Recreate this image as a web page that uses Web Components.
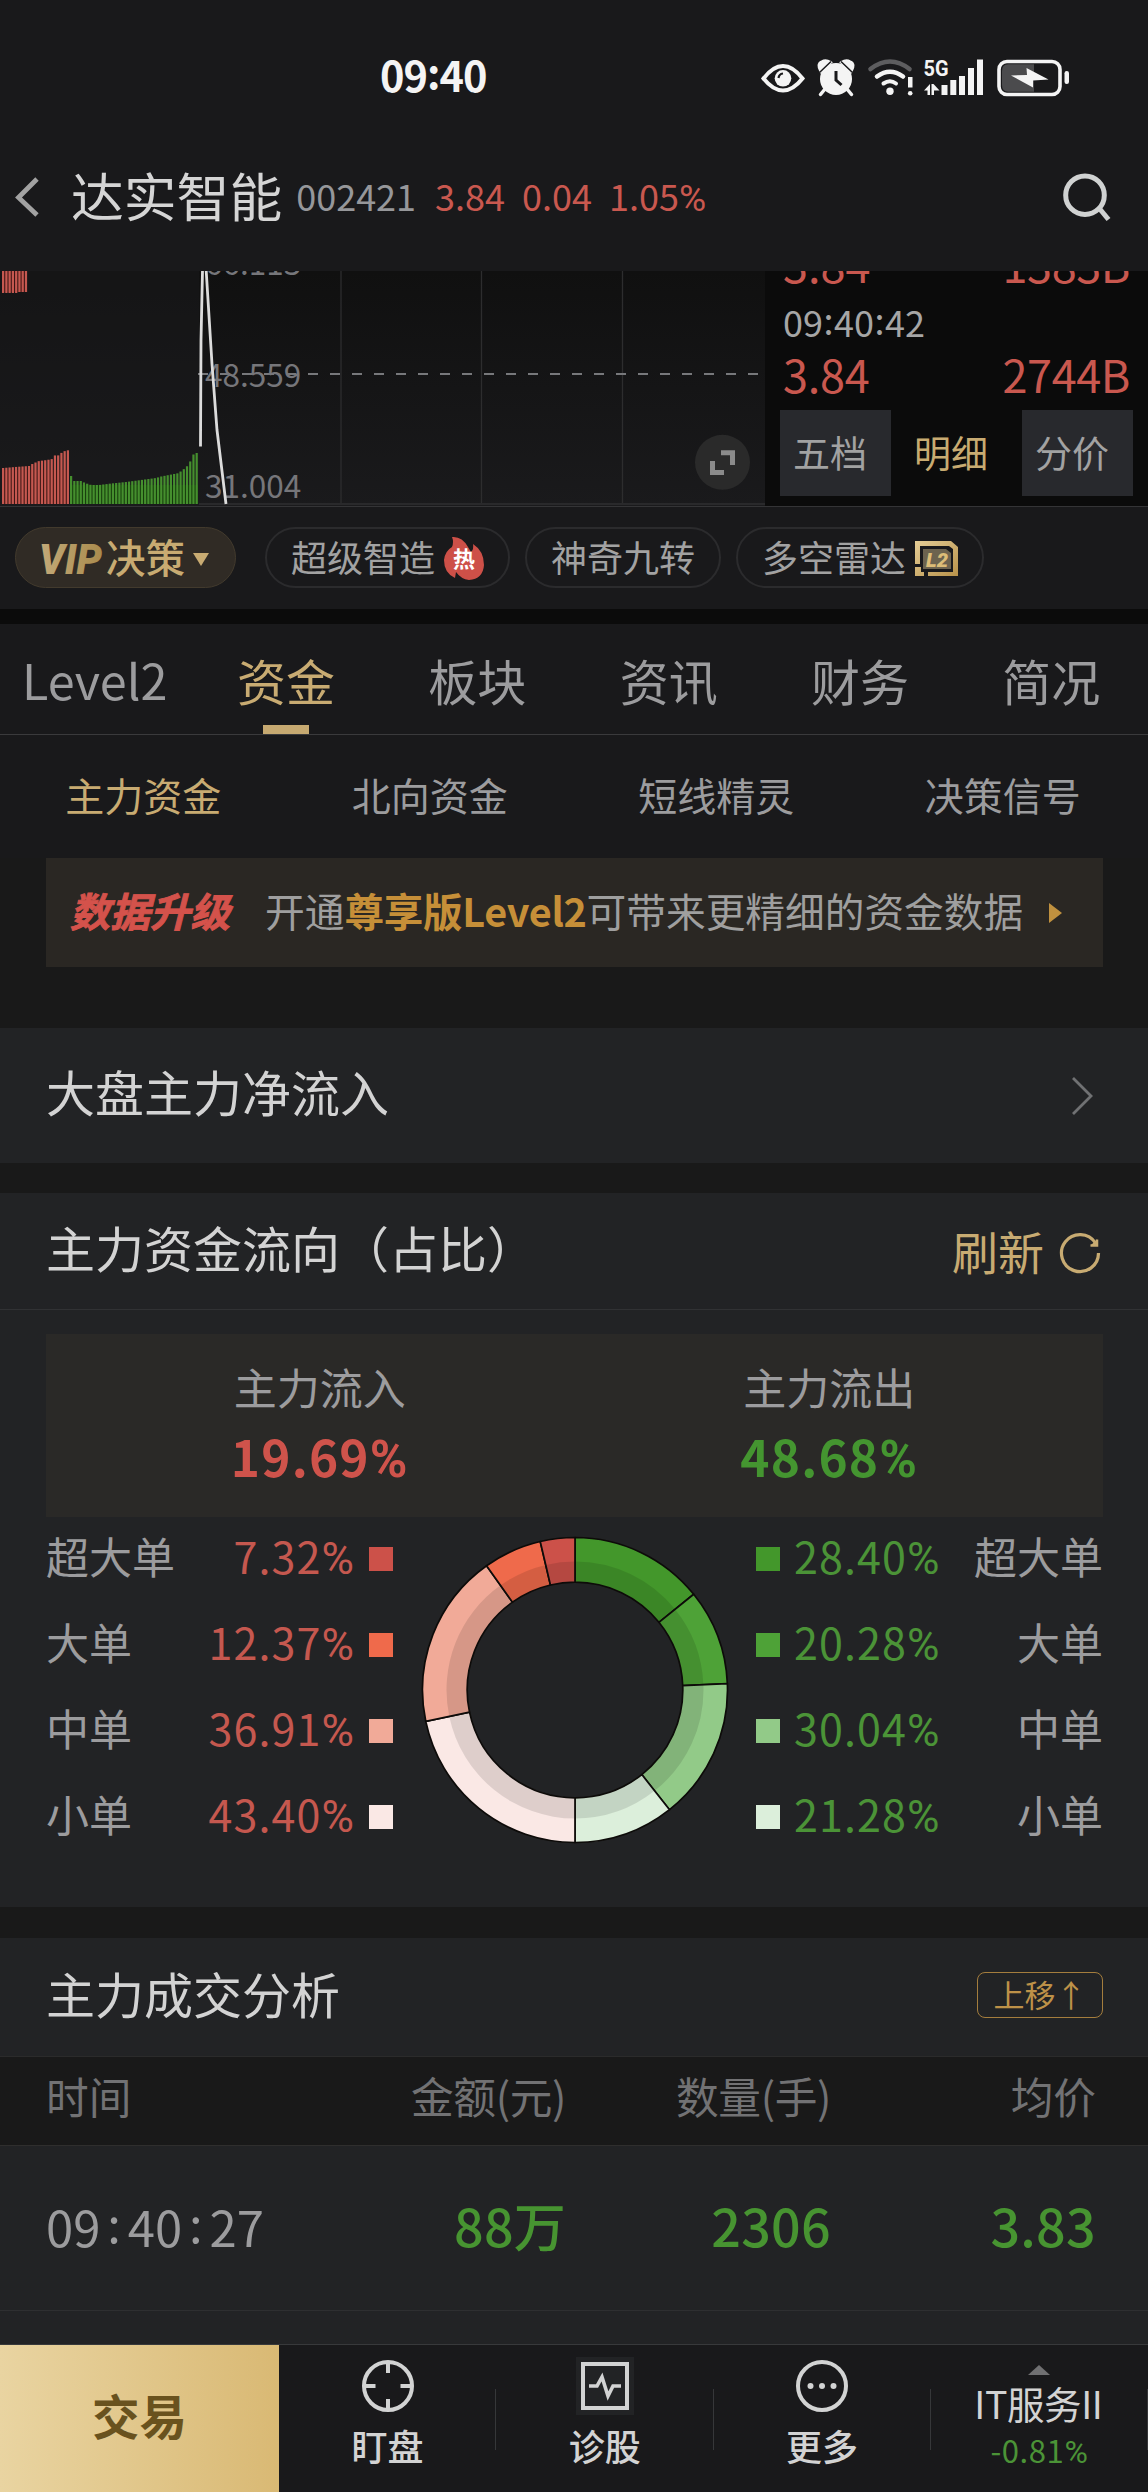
<!DOCTYPE html>
<html lang="zh-CN">
<head>
<meta charset="utf-8">
<title>达实智能 002421</title>
<style>
html,body{margin:0;padding:0;background:#19191a}
body{width:1148px;height:2492px;overflow:hidden;font-family:"Noto Sans CJK SC",sans-serif;color:#d4d4d4}
</style>
</head>
<body>
<stock-page></stock-page>
<script>
function define(tag, css, html, after) {
  const tpl = document.createElement('template');
  tpl.innerHTML = '<style>:host{display:block;box-sizing:border-box}*{box-sizing:border-box}svg{display:block;flex:none;overflow:visible}' + css + '</style>' + html;
  customElements.define(tag, class extends HTMLElement {
    connectedCallback() {
      if (this.shadowRoot) return;
      this.attachShadow({ mode: 'open' }).appendChild(tpl.content.cloneNode(true));
      if (after) after.call(this, this.shadowRoot);
    }
  });
}

/* Single-line label. s: size, c: colour, w: weight, ls: letter spacing, colon: padding beside ":" */
define('ui-text',
  ':host{display:block;flex:none;white-space:pre;line-height:1;padding-bottom:.115em}' +
  '.p{font-family:Roboto,sans-serif;font-size:1.03em;line-height:0}' +
  '.c{position:relative;top:-.07em;line-height:0}',
  '', function (root) {
    const a = n => this.getAttribute(n);
    const st = this.style;
    if (a('s')) st.fontSize = a('s') + 'px';
    if (a('c')) st.color = a('c');
    if (a('w')) st.fontWeight = a('w');
    if (a('ls')) st.letterSpacing = a('ls') + 'px';
    const out = document.createElement('span');
    for (const part of this.textContent.split(/([%:])/)) {
      if (part === '%' || part === ':') {
        const s = document.createElement('span');
        s.className = part === '%' ? 'p' : 'c';
        if (part === ':' && a('colon')) s.style.padding = '0 ' + a('colon') + 'px';
        s.textContent = part;
        out.appendChild(s);
      } else if (part) out.appendChild(document.createTextNode(part));
    }
    root.appendChild(out);
  });

define('status-bar',
  ':host{display:flex;height:123px;padding:32px 78px 0 380px;align-items:center;justify-content:space-between}',
  `<ui-text s="41.500" w="700" c="#f4f4f4" ls="-1">09:40</ui-text>
  <svg width="310" height="40" viewBox="760 58 310 40" fill="#f4f4f4">
    <path d="M763.500 78.500Q773 66 783 66T802.500 78.500Q793 90.500 783 90.500T763.500 78.500Z" fill="none" stroke="#f4f4f4" stroke-width="4"/>
    <circle cx="783" cy="78.300" r="8.300"/><path d="M778.500 78Q779 74 783 73.500" fill="none" stroke="#19191b" stroke-width="2.200"/>
    <circle cx="836" cy="79" r="16"/><path d="M821 71Q817 64 822 62Q826 60 830 62.500ZM851 71Q855 64 850 62Q846 60 842 62.500ZM825 89L820.500 94.500M847 89L851.500 94.500" stroke="#f4f4f4" stroke-width="3.500" stroke-linecap="round"/>
    <path d="M819.500 72.500L831 61.500M852.500 72.500L841 61.500" stroke="#19191b" stroke-width="1.500"/>
    <path d="M836 71V80L841.500 85" fill="none" stroke="#19191b" stroke-width="3"/>
    <g fill="none" stroke="#f4f4f4" stroke-width="4.600" stroke-linecap="round">
      <path d="M870.500 69Q890 54 909.500 69" stroke="#5d5d5f"/>
      <path d="M877 76.500Q890 67 903 76.500"/><path d="M883.500 83.500Q890 79 896 83.500" stroke-width="4"/></g>
    <circle cx="890" cy="91.200" r="3.700"/><path d="M908 77h4.500v10.500h-4.500z"/><circle cx="910.200" cy="93.200" r="2.300"/>
    <text x="923.500" y="76" font-family="Roboto" font-weight="700" font-size="22" textLength="25" lengthAdjust="spacingAndGlyphs">5G</text>
    <path d="M924 90.500L930 84V95H927.500V90.500ZM931.500 84V95H934V90.500H939.500L933.500 84Z"/>
    <path d="M941.500 85h6v10h-6zM950.300 80h6v15h-6zM959 76h6v19h-6zM968 68h6v27h-6zM977 59.500h6v35.500h-6z"/>
    <rect x="999" y="61.500" width="61" height="33" rx="8" fill="none" stroke="#f4f4f4" stroke-width="3.600"/>
    <path d="M1034 64.300V91.700H1008Q1002 91.700 1002 85V71Q1002 64.300 1008 64.300Z" fill="#4b4b4d"/>
    <path d="M1011 75.500L1027 75L1026.500 68L1048.500 79.500L1033 80.500L1033 87.500Z"/>
    <rect x="1064.500" y="71" width="4.500" height="13" rx="2.200"/>
  </svg>`);

define('nav-bar',
  ':host{display:flex;height:148px;padding:0 36px 0 15px;align-items:center}.t{margin:0 14px 0 32px}.g{margin-left:17px}.g1{margin-left:19px}.sp{flex:1}',
  `<svg width="24" height="40" viewBox="0 0 24 40"><path d="M22 2L3.500 20.500L22 38" fill="none" stroke="#a2a2a2" stroke-width="4.800"/></svg>
  <ui-text class="t" s="52.800" c="#d5d5d5">达实智能</ui-text>
  <ui-text s="36" c="#96979a">002421</ui-text>
  <ui-text class="g1" s="36" c="#c9584f">3.84</ui-text><ui-text class="g" s="36" c="#c9584f">0.04</ui-text><ui-text class="g" s="36" c="#c9584f">1.05%</ui-text>
  <span class="sp"></span>
  <svg width="50" height="50" viewBox="1062 172 50 50" fill="none" stroke="#d0d2d2" stroke-width="5"><circle cx="1085" cy="195.200" r="19.300"/><path d="M1099 208L1108.500 219.500"/></svg>`);

define('minute-chart',
  ':host{width:765px;height:235px;overflow:hidden}',
  `<svg width="765" height="235" viewBox="0 271 765 235"><defs><linearGradient id="g" x2="0" y2="1"><stop offset="0" stop-color="#101010"/><stop offset="1" stop-color="#1a1a1c"/></linearGradient></defs>
  <rect y="271" width="765" height="235" fill="url(#g)"/><rect y="271" width="199" height="235" fill="#19191b" opacity=".5"/>
  <path d="M341 271V505M481.500 271V505M622.500 271V505" stroke="#2d2d2e" stroke-width="1.300"/>
  <path d="M199 504H765" stroke="#29292b" stroke-width="2"/>
  <path d="M198 374H758" stroke="#77787b" stroke-width="1.800" stroke-dasharray="10 12"/>
  <g id="bars"></g>
  <g font-family="Noto Sans CJK SC" font-size="31.500" fill="#76767a"><text x="205" y="275">66.113</text><text x="205" y="387">48.559</text><text x="205" y="498">31.004</text></g>
  <path d="M200.500 446.500L201 340L202.500 271M206.200 271L212 364L217 430L226 504" fill="none" stroke="#dcdcdc" stroke-width="2.800"/>
  <circle cx="722.500" cy="462.300" r="27.500" fill="#2a2a2a"/>
  <path d="M721 452.800H732.500V465M712.500 461V472.500H724" fill="none" stroke="#8b8b8b" stroke-width="5"/></svg>`,
  function (root) {
    const g = root.getElementById('bars');
    const at = (k, x) => { let i = 1; while (i < k.length - 1 && k[i][0] < x) i++; const [a, b] = [k[i - 1], k[i]]; return a[1] + (b[1] - a[1]) * (x - a[0]) / (b[0] - a[0]); };
    const red = [[2, 468], [14, 467], [28, 466], [32, 463.5], [38, 461], [46, 460], [51, 459], [55, 454], [58, 456], [61, 452], [64, 451], [68, 450]];
    const green = [[70, 476], [73, 481], [80, 481], [84, 483], [90, 485], [98, 485], [110, 483.5], [125, 482], [140, 480], [155, 478], [160, 476.5], [178, 473], [181, 470], [184, 468.500], [187, 465], [190, 460], [193, 453], [197, 453]];
    let s = '<path fill="#3a1513" d="M2 271H27V292H2ZM2 470H69V504H2Z"/><path fill="#153a0b" d="M70 485H198V504H70Z"/>';
    const bar = (x, y, b, c) => s += `<rect x="${x.toFixed(2)}" y="${y}" width="2.200" height="${b - y}" fill="${c}"/>`;
    for (let i = 0; i < 8; i++) bar(2 + i * 3.27, 271, i > 4 ? 292 : 293, '#c55850');
    for (let i = 0; i < 21; i++) bar(2 + i * 3.24, at(red, 2 + i * 3.24), 504, '#c55850');
    for (let i = 0; i < 40; i++) bar(70 + i * 3.22, at(green, 70 + i * 3.22), 504, '#458f2e');
    g.innerHTML = s;
  });

define('trade-ticks',
  ':host{display:flex;flex-direction:column;justify-content:flex-end;width:383px;height:235px;overflow:hidden;background:#0b0b0b;padding:0 15px 10px}' +
  '.r{display:flex;justify-content:space-between;padding:0 3px 0 3px;height:55px;align-items:center;flex:none}.tm{padding-top:4px}.tabs{display:flex;justify-content:space-between;height:86px;margin-top:6px;flex:none}' +
  '.tabs div{width:111px;display:flex;align-items:center;padding:3px 0 0 13px;background:#28292d}.tabs .on{background:none}',
  `<div class="r"><ui-text s="45" c="#c9584f">3.84</ui-text><ui-text s="45" c="#c9584f" ls="-.4">1383B</ui-text></div>
  <div class="r tm"><ui-text s="36" c="#a6a6a6" colon=".500">09:40:42</ui-text></div>
  <div class="r"><ui-text s="45" c="#c9584f" ls="-.2">3.84</ui-text><ui-text s="45" c="#c9584f" ls="-.4">2744B</ui-text></div>
  <div class="tabs"><div><ui-text s="37" c="#a2a2a2">五档</ui-text></div><div class="on"><ui-text s="37" c="#c8ab72">明细</ui-text></div><div><ui-text s="37" c="#a2a2a2">分价</ui-text></div></div>`);

define('tool-pill',
  ':host{display:flex;align-items:center;height:61px;border:2px solid #2b2b2d;border-radius:31px;padding:1px 24px 0 24px;gap:9px}:host([vip]){background:#302b25;border:1px solid #423a2d}',
  '<slot></slot>');

define('tool-row',
  ':host{display:flex;height:103px;border-top:1px solid #343436;padding:20px 15px 0;align-items:flex-start;background:#19191b}' +
  'tool-pill+tool-pill{margin-left:15px}.a{width:221px;gap:0;padding-left:24px}tool-pill.b{margin-left:29px;width:245px}.c{width:196px}.d{width:248px}.v{margin-right:2px}',
  `<tool-pill vip class="a"><svg class="v" width="64" height="40" viewBox="0 0 64 40"><defs><linearGradient id="vg"><stop offset="0" stop-color="#c3aa79"/><stop offset="1" stop-color="#a98b4d"/></linearGradient></defs><text x="-1" y="36" font-family="Roboto" font-weight="900" font-style="italic" font-size="43" textLength="63" lengthAdjust="spacingAndGlyphs" fill="url(#vg)">VIP</text></svg><ui-text s="39.500" w="500" c="#c8ab72">决策</ui-text><svg width="24" height="16" viewBox="0 0 24 16"><path d="M8 3H24L16 16Z" fill="#c8ab72"/></svg></tool-pill>
  <tool-pill class="b"><ui-text s="36" c="#a2a2a2">超级智造</ui-text><svg width="40" height="44" viewBox="444 535 40 44"><path d="M452 536Q462 535 468 546L471 551Q474 548 473 543Q484 550 484 564Q483 578 469 579Q461 578 456 571L455 577Q444 572 444 559Q445 550 452 546Q454 541 452 536Z" fill="#cd5048"/><text x="464" y="566" text-anchor="middle" font-family="Noto Sans CJK SC" font-weight="700" font-size="22" fill="#fff">热</text></svg></tool-pill>
  <tool-pill class="c"><ui-text s="36" c="#a2a2a2">神奇九转</ui-text></tool-pill>
  <tool-pill class="d"><ui-text s="36" c="#a2a2a2">多空雷达</ui-text><svg width="43" height="35" viewBox="915 540 43 35"><defs><linearGradient id="l" x2="1" y2="1"><stop offset="0" stop-color="#e5cd96"/><stop offset="1" stop-color="#b8924a"/></linearGradient></defs><path fill-rule="evenodd" fill="url(#l)" d="M915 540H951L958 546V575H928V571H953V548L949 545H920V563H915ZM915 566H921V571H924V575H915Z"/><path d="M923 548H946L951 552V568H923Z" fill="#6c634f"/><text x="926" y="565.500" font-family="Roboto" font-weight="900" font-style="italic" font-size="20" textLength="22" lengthAdjust="spacingAndGlyphs" fill="#dcbd78">L2</text></svg></tool-pill>`);

define('main-tabs',
  ':host{display:grid;grid-template-columns:repeat(6,1fr);height:111px;border-bottom:1px solid #3a3a3c;background:#19191b}' +
  'div{display:flex;flex-direction:column;align-items:center;justify-content:space-between;padding:31px 2px 0 0}i{width:46px;height:9px;background:#c6a971}',
  `<div><ui-text s="48.500" c="#9c9c9e">Level2</ui-text></div><div><ui-text s="49" c="#c8ab72">资金</ui-text><i></i></div><div><ui-text s="49" c="#9c9c9e">板块</ui-text></div><div><ui-text s="49" c="#9c9c9e">资讯</ui-text></div><div><ui-text s="49" c="#9c9c9e">财务</ui-text></div><div><ui-text s="49" c="#9c9c9e">简况</ui-text></div>`);

define('sub-tabs',
  ':host{display:grid;grid-template-columns:repeat(4,1fr);height:123px;align-items:center;justify-items:center;background:#19191b;padding-right:2px}',
  `<ui-text s="39" c="#c8ab72">主力资金</ui-text><ui-text s="39" c="#9c9c9e">北向资金</ui-text><ui-text s="39" c="#9c9c9e">短线精灵</ui-text><ui-text s="39" c="#9c9c9e">决策信号</ui-text>`);

define('upgrade-banner',
  ':host{display:flex;align-items:center;height:109px;margin:0 45px 61px 46px;padding-left:24px;background:#2a2723}.i{font-style:italic;margin-right:35px;-webkit-text-stroke:.9px #d4524b}svg{margin-left:26px}',
  `<ui-text class="i" s="40" w="700" c="#d4524b">数据升级</ui-text><ui-text s="39.800" c="#9f9f9f">开通</ui-text><ui-text s="39.600" w="700" c="#c68f38" ls="-.35">尊享版Level2</ui-text><ui-text s="39.700" c="#9f9f9f">可带来更精细的资金数据</ui-text><svg width="13" height="20" viewBox="0 0 13 20"><path d="M0 0L13 10L0 20Z" fill="#c0913f"/></svg>`);

define('market-link',
  ':host{display:flex;align-items:center;justify-content:space-between;height:135px;margin-bottom:30px;padding:0 55px 4px 46px;background:#222325}svg{margin-top:5px}',
  `<ui-text s="49" c="#d3d3d3">大盘主力净流入</ui-text><svg width="22" height="38" viewBox="0 0 22 38"><path d="M2 1L20 19L2 37" fill="none" stroke="#707173" stroke-width="2.800"/></svg>`);

define('donut-chart', ':host{width:308px;height:308px}', '<svg width="308" height="308" viewBox="-154 -154 308 308"></svg>',
  function (root) {
    const seg = [[28.40, '#43972b'], [20.28, '#4ea237'], [30.04, '#92ca88'], [21.28, '#dcefdb'], [43.40, '#fae8e5'], [36.91, '#f1aa98'], [12.37, '#ef6a4b'], [7.32, '#cc5149']];
    const pt = (r, a) => (r * Math.sin(a)).toFixed(2) + ' ' + (-r * Math.cos(a)).toFixed(2);
    const ring = (R, r, a, b) => `M${pt(R, a)}A${R} ${R} 0 0 1 ${pt(R, b)}L${pt(r, b)}A${r} ${r} 0 0 0 ${pt(r, a)}Z`;
    let a = 0, s = '';
    for (const [v, c] of seg) {
      const b = a + v / 100 * Math.PI;
      s += `<path d="${ring(152.5, 107.8, a, b)}" fill="${c}"/><path d="${ring(128.5, 107.8, a, b)}" fill="#000" opacity=".11"/><path d="${ring(152.5, 107.8, a, b)}" fill="none" stroke="#0d0b09" stroke-width="1.700" stroke-linejoin="round"/>`;
      a = b;
    }
    root.querySelector('svg').innerHTML = s;
  });

define('order-row',
  ':host{display:flex;align-items:center;height:43px;width:347px}:host([out]){flex-direction:row-reverse}.n{margin-left:auto}i{width:24px;height:24px;margin:2px 0 0 14px}:host([out]) .n{margin:0 auto 0 0}:host([out]) i{margin:2px 14px 0 0}',
  '', function (root) {
    const a = n => this.getAttribute(n), out = this.hasAttribute('out');
    root.innerHTML += `<ui-text s="43" c="#9c9c9e">${a('name')}</ui-text><ui-text class="n" s="43" ls="1.1" c="${out ? '#4b9337' : '#c5584f'}">${a('val')}</ui-text><i style="background:${a('key')}"></i>`;
  });

define('flow-section',
  ':host{height:714px;background:#222325;margin-bottom:31px}.h{display:flex;justify-content:space-between;align-items:center;height:117px;border-bottom:1px solid #313234;padding:0 47px 4px 46px}' +
  '.r{display:flex;align-items:center;gap:15px;padding-top:7px}.box{display:grid;grid-template-columns:1fr 1fr;height:183px;margin:24px 45px 0 46px;padding:31px 19px 0;background:#2a2927}.box div{display:flex;flex-direction:column;align-items:center;gap:18px}' +
  '.m{display:flex;justify-content:space-between;padding:19px 45px 0 46px}.l{display:flex;flex-direction:column;gap:43.3px}',
  `<div class="h"><ui-text s="49" c="#d3d3d3">主力资金流向（占比）</ui-text><div class="r"><ui-text s="46" c="#c8ab72">刷新</ui-text><svg width="42" height="42" viewBox="0 0 42 42" fill="none" stroke="#c8ab72" stroke-width="3.200"><path d="M39.500 21A18.500 18.500 0 1 1 36.500 11"/><path d="M31.500 13.500H38V7.500" fill="#c8ab72" stroke-width="2.500"/></svg></div></div>
  <div class="box"><div><ui-text s="43" c="#9c9c9e">主力流入</ui-text><ui-text s="49.500" w="700" c="#cf534b" ls="1.2">19.69%</ui-text></div><div><ui-text s="43" c="#9c9c9e">主力流出</ui-text><ui-text s="49.500" w="700" c="#449530" ls="1.2">48.68%</ui-text></div></div>
  <div class="m"><div class="l"><order-row name="超大单" val="7.32%" key="#cc5149"></order-row><order-row name="大单" val="12.37%" key="#ef6a4b"></order-row><order-row name="中单" val="36.91%" key="#f1aa98"></order-row><order-row name="小单" val="43.40%" key="#fae8e5"></order-row></div>
  <donut-chart></donut-chart>
  <div class="l"><order-row out name="超大单" val="28.40%" key="#43972b"></order-row><order-row out name="大单" val="20.28%" key="#4ea237"></order-row><order-row out name="中单" val="30.04%" key="#92ca88"></order-row><order-row out name="小单" val="21.28%" key="#dcefdb"></order-row></div></div>`);

define('deal-section',
  ':host{height:406px;background:#222325}.h{display:flex;justify-content:space-between;align-items:center;height:118px;padding:0 45px 4px 46px}' +
  '.b{width:126px;height:46px;border:1.500px solid #a47d3d;border-radius:8px;display:flex;align-items:center;justify-content:center}' +
  '.g{display:grid;grid-template-columns:1fr 200px 265px 265px;align-items:center;padding:0 52px 0 46px}.g>*{justify-self:end}.g>:first-child{justify-self:start}' +
  '.th{height:90px;background:#191919;border-top:1px solid #2b2b2b;border-bottom:1px solid #2f2e2d;padding-bottom:6px}.td{height:165px;border-bottom:1px solid #2e2f31}',
  `<div class="h"><ui-text s="49" c="#d3d3d3">主力成交分析</ui-text><div class="b"><ui-text s="31" c="#bd9148">上移↑</ui-text></div></div>
  <div class="g th"><ui-text s="42.700" c="#727274">时间</ui-text><ui-text s="42.700" c="#727274" ls="-.4">金额(元)</ui-text><ui-text s="42.700" c="#727274" ls="-.4">数量(手)</ui-text><ui-text s="42.700" c="#727274">均价</ui-text></div>
  <div class="g td"><ui-text s="49" c="#9c9c9e" colon="6.900">09:40:27</ui-text><ui-text s="52" w="500" c="#479431" ls=".2">88万</ui-text><ui-text s="52" w="500" c="#479431" ls=".3">2306</ui-text><ui-text s="52" w="500" c="#479431" ls=".3">3.83</ui-text></div>`);

define('bar-item',
  ':host{display:flex;flex-direction:column;align-items:center;flex:1;position:relative;padding-top:12px;gap:12px}:host::after{content:"";position:absolute;right:0;top:44px;width:1px;height:61px;background:#363739}',
  '<slot></slot>');

define('bottom-bar',
  ':host{display:flex;height:148px;border-top:1px solid #38393b;background:#19191b}.t{width:279px;display:flex;align-items:center;justify-content:center;background:linear-gradient(90deg,#e9d4a1,#d9b974);padding-bottom:2px}.l{gap:0;padding-top:20px}.x{margin:9px 2px 0 0}.y{margin-top:8px}',
  `<div class="t"><ui-text s="47.500" w="700" c="#69521e">交易</ui-text></div>
  <bar-item><svg width="58" height="58" viewBox="-29 -29 58 58" fill="none" stroke="#d2d3d3" stroke-width="4"><circle r="24"/><path d="M0 -24V-13M0 24V13M-24 0H-12.500M24 0H12.500"/></svg><ui-text s="36" w="500" c="#d3d3d3">盯盘</ui-text></bar-item>
  <bar-item><svg width="58" height="58" viewBox="-29 -29 58 58" fill="none" stroke="#d2d3d3" stroke-width="4"><path d="M-29 -29H29V29H-29Z" fill="#222325" stroke="none"/><path d="M-22 -22H22V22H-22Z"/><path d="M-16 0H-8L-3 -9L3 10L8 0H16" stroke-width="3.600"/></svg><ui-text s="36" w="500" c="#d3d3d3">诊股</ui-text></bar-item>
  <bar-item><svg width="58" height="58" viewBox="-29 -29 58 58"><circle r="24" fill="none" stroke="#d2d3d3" stroke-width="4"/><g fill="#d2d3d3"><circle cx="-11.500" r="3"/><circle r="3"/><circle cx="11.500" r="3"/></g></svg><ui-text s="36" w="500" c="#d3d3d3">更多</ui-text></bar-item>
  <bar-item class="l"><svg width="22" height="10" viewBox="0 0 22 10"><path d="M0 10L11 0L22 10Z" fill="#707072"/></svg><ui-text class="x" s="37.500" c="#d3d3d3" ls="-.4">IT服务II</ui-text><ui-text class="y" s="31" c="#4b9337" ls=".6">-0.81%</ui-text></bar-item>`);

define('stock-page',
  ':host{width:1148px;height:2492px;background:#191919}.top{background:#19191b}.q{display:flex;height:235px}.gap{height:15px;background:#0b0b0b}',
  `<div class="top"><status-bar></status-bar><nav-bar></nav-bar></div>
  <div class="q"><minute-chart></minute-chart><trade-ticks></trade-ticks></div>
  <tool-row></tool-row><div class="gap"></div>
  <main-tabs></main-tabs><sub-tabs></sub-tabs><upgrade-banner></upgrade-banner>
  <market-link></market-link><flow-section></flow-section><deal-section></deal-section><bottom-bar></bottom-bar>`);
</script>
</body>
</html>
